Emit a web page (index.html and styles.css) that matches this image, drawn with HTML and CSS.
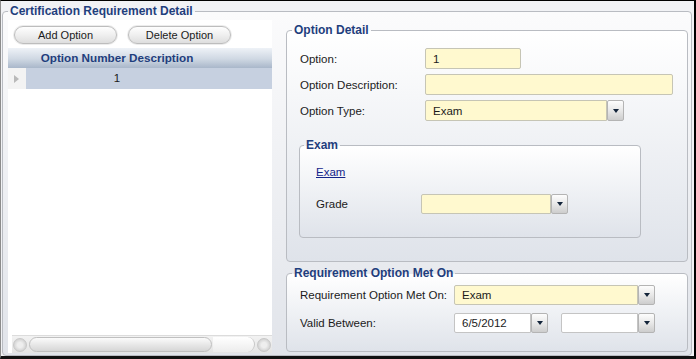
FILE: index.html
```html
<!DOCTYPE html>
<html lang="en">
<head>
    <meta charset="UTF-8">
    <title>Certification Requirement Detail</title>
    <link rel="stylesheet" href="styles.css">
</head>
<body>
    <div class="window">
        <fieldset class="group outer">
            <legend>Certification Requirement Detail</legend>
            <div class="split">
                <!-- option list -->
                <div class="list-panel">
                    <div class="toolbar">
                        <button class="pill">Add Option</button>
                        <button class="pill">Delete Option</button>
                    </div>
                    <div class="grid">
                        <div class="grid-head">
                            <span class="indicator"></span>
                            <span class="col">Option Number Description</span>
                        </div>
                        <div class="grid-row selected">
                            <span class="indicator"><i class="arrow"></i></span>
                            <span class="col">1</span>
                        </div>
                    </div>
                    <div class="hscroll">
                        <span class="sb-btn"></span>
                        <span class="sb-thumb"></span>
                        <span class="sb-rest"></span>
                        <span class="sb-btn"></span>
                    </div>
                </div>

                <!-- option detail -->
                <div class="detail">
                    <fieldset class="group panel">
                        <legend>Option Detail</legend>
                        <div class="panel-body">
                            <div class="row">
                                <label class="label">Option:</label>
                                <div class="field w-option">1</div>
                            </div>
                            <div class="row">
                                <label class="label">Option Description:</label>
                                <div class="field w-desc"></div>
                            </div>
                            <div class="row">
                                <label class="label">Option Type:</label>
                                <div class="select w-type"><div class="field">Exam</div><span class="drop"></span></div>
                            </div>

                            <fieldset class="group sub">
                                <legend>Exam</legend>
                                <div class="sub-body">
                                    <a class="link" href="#">Exam</a>
                                    <div class="row short">
                                        <label class="label grade">Grade</label>
                                        <div class="select w-grade"><div class="field"></div><span class="drop"></span></div>
                                    </div>
                                </div>
                            </fieldset>
                        </div>
                    </fieldset>

                    <fieldset class="group panel">
                        <legend>Requirement Option Met On</legend>
                        <div class="req-body">
                            <div class="row short">
                                <label class="label wide">Requirement Option Met On:</label>
                                <div class="select w-met"><div class="field">Exam</div><span class="drop"></span></div>
                            </div>
                            <div class="row short">
                                <label class="label wide">Valid Between:</label>
                                <div class="select w-date"><div class="field white">6/5/2012</div><span class="drop"></span></div>
                                <div class="select w-date gap"><div class="field white"></div><span class="drop"></span></div>
                            </div>
                        </div>
                    </fieldset>
                </div>
            </div>
        </fieldset>
    </div>
</body>
</html>
```

FILE: styles.css
```css
body { margin: 0; font-family: "Liberation Sans", Arial, sans-serif; font-size: 11.5px; color: #1b1b1b; }

.window {
    box-sizing: border-box;
    width: 696px;
    height: 359px;
    border-top: 1px solid #000;
    border-right: 2px solid #000;
    border-bottom: 3px solid #111;
    border-left: 1px solid #8c8c8c;
    padding: 3px 2px 0 1px;
    background: #f1f2f5;
}

/* group boxes */
.group {
    margin: 0;
    padding: 0;
    min-width: 0;
    border: 1px solid #b9bcc2;
    border-radius: 4px;
    background: linear-gradient(#ffffff, #dfe3ea);
}
.group > legend {
    margin-left: 5px;
    padding: 0 2px;
    font-size: 12px;
    font-weight: bold;
    line-height: 14px;
    color: #1f3e7d;
}
.outer {
    box-sizing: border-box;
    height: 100%;
    padding: 2px 3px 2px 5px;
    display: flex;
    flex-direction: column;
    background: linear-gradient(#fbfbfc, #e1e4ea);
}
.outer > legend { margin-left: 0; }

.split { flex: 1; display: flex; gap: 14px; }

/* left list */
.list-panel { width: 264px; display: flex; flex-direction: column; background: #fff; }
.toolbar { display: flex; gap: 11px; padding: 6px 0 0 6px; }
.pill {
    width: 103px;
    height: 18px;
    padding: 0;
    border: 1px solid #bdbdbd;
    border-radius: 9px;
    background: linear-gradient(#fefefe, #efefef 50%, #dedede);
    box-shadow: 0 0 0 1px #ececec;
    font-family: "Liberation Sans", Arial, sans-serif;
    font-size: 11px;
    color: #1b1b1b;
}
.grid { flex: 1; margin-top: 4px; }
.grid-head { display: flex; height: 20px; background: linear-gradient(#eef2f7, #cfd8e3 55%, #a9b7ca); }
.grid-head .col { font-weight: bold; font-size: 11.7px; color: #1f3e7d; line-height: 20px; }
.indicator { width: 18px; flex: none; }
.col { width: 182px; text-align: center; }
.grid-row { display: flex; height: 21px; line-height: 21px; background: #c6d0e0; }
.grid-row .indicator { background: #f3f3f3; display: flex; align-items: center; justify-content: center; }
.arrow { width: 0; height: 0; border-top: 4px solid transparent; border-bottom: 4px solid transparent; border-left: 5px solid #b9b9b9; margin-left: -2px; }

.hscroll {
    height: 17px;
    margin-left: 4px;
    border-top: 1px solid #dcdcdc;
    display: flex;
    align-items: center;
    gap: 1px;
    background: linear-gradient(#f2f2f2, #e4e4e4);
}
.sb-btn {
    width: 14px;
    height: 14px;
    margin: 0 1px;
    box-sizing: border-box;
    border: 1px solid #c8c8c8;
    border-radius: 50%;
    background: radial-gradient(circle at 50% 50%, #eeeeee 30%, #d4d4d4 70%);
}
.sb-thumb {
    width: 183px;
    height: 15px;
    box-sizing: border-box;
    border: 1px solid #c0c0c0;
    border-radius: 8px;
    background: linear-gradient(#fbfbfb, #e8e8e8 50%, #d6d6d6);
}
.sb-rest { flex: 1; height: 15px; border-radius: 0 8px 8px 0; background: linear-gradient(#ffffff, #ececec); border-right: 1px solid #c8c8c8; }

/* right side */
.detail { width: 402px; margin-top: 3px; display: flex; flex-direction: column; gap: 4px; }
.panel-body { padding: 11px 0 23px 12px; }
.req-body { padding: 5px 0 18px 12px; }

.row { display: flex; align-items: center; height: 21px; }
.row + .row { margin-top: 5px; }
.row.short { height: 20px; }
.req-body .row + .row { margin-top: 8px; }
.label { box-sizing: border-box; width: 126px; padding-left: 1px; flex: none; }
.label.wide { width: 155px; }
.label.grade { width: 105px; padding-left: 0; }

.field {
    box-sizing: border-box;
    height: 100%;
    display: flex;
    align-items: center;
    padding-left: 7px;
    border: 1px solid #c6c5b5;
    border-radius: 2px;
    background: #fff9cf;
}
.field.white { background: #fff; border-color: #c4c4c4; }
.w-option { width: 96px; }
.w-desc { width: 248px; }

.select { display: flex; height: 100%; }
.select .field { flex: 1; border-radius: 2px 0 0 2px; }
.w-type { width: 199px; }
.w-grade { width: 147px; }
.w-met { width: 201px; }
.w-date { width: 94px; }
.w-date.gap { margin-left: 13px; }
.drop {
    box-sizing: border-box;
    width: 17px;
    height: 100%;
    flex: none;
    display: flex;
    align-items: center;
    justify-content: center;
    border: 1px solid #b4b4b4;
    border-radius: 2px;
    background: linear-gradient(#fdfdfd, #e8e8e8 50%, #cdcdcd);
}
.drop::after {
    content: "";
    width: 0;
    height: 0;
    border-left: 3.5px solid transparent;
    border-right: 3.5px solid transparent;
    border-top: 4px solid #13243a;
}

/* exam sub group */
.sub { width: 340px; margin-top: 17px; }
.sub > legend { margin-left: 4px; }
.sub-body { padding: 13px 0 23px 16px; }
.link { display: block; line-height: 14px; color: #14248a; }
.sub-body .row { margin-top: 15px; }
```
